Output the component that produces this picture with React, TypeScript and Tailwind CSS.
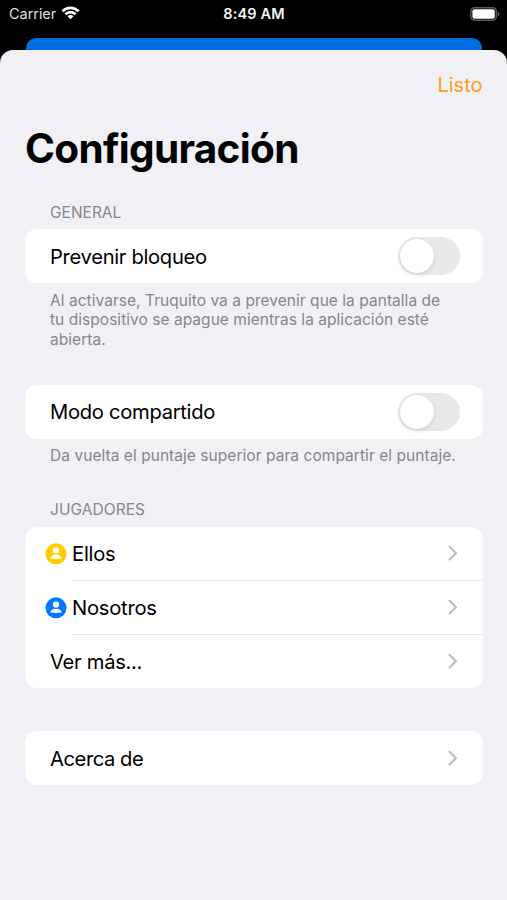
import { ReactNode, useState } from "react";

type ToggleProps = {
  label: string;
  checked: boolean;
  onChange: () => void;
};

function Toggle({ label, checked, onChange }: ToggleProps) {
  return (
    <button
      role="switch"
      aria-checked={checked}
      aria-label={label}
      onClick={onChange}
      className={`flex h-[38px] w-[62px] items-center rounded-full p-[2px] ${
        checked ? "justify-end bg-[#34c759]" : "justify-start bg-[#e9e9ea]"
      }`}
    >
      <span className="size-[34px] rounded-full bg-white shadow-[0_2px_5px_rgba(0,0,0,0.1),0_0_1px_rgba(0,0,0,0.08)]" />
    </button>
  );
}

function Chevron() {
  return (
    <svg width="10" height="16" viewBox="0 0 10 16" fill="none" className="shrink-0">
      <path d="M1.6 1.8L7.9 8.2L1.6 14.6" stroke="#bcbcbf" strokeWidth="2.1" strokeLinecap="round" strokeLinejoin="miter" />
    </svg>
  );
}

function PersonIcon({ color }: { color: string }) {
  return (
    <svg width="22" height="22" viewBox="0 0 22 22" className="shrink-0">
      <circle cx="11" cy="10.8" r="10.5" fill={color} />
      <circle cx="11" cy="7.6" r="3.1" fill="#fff" />
      <path d="M5.5 15.1C5.5 13.2 7.8 11.8 11 11.8S16.5 13.2 16.5 15.1C16.5 15.6 16.2 15.8 15.7 15.8H6.3C5.8 15.8 5.5 15.6 5.5 15.1Z" fill="#fff" />
    </svg>
  );
}

function Card({ children }: { children: ReactNode }) {
  return <div className="overflow-hidden rounded-[12px] bg-white">{children}</div>;
}

function StatusBar() {
  return (
    <div className="grid h-[28px] grid-cols-3 items-center pr-[7px] pl-[9px] text-[14.5px] leading-[28px] text-white">
      <div className="flex items-center gap-[5px]">
        <span className="tracking-[-0.05px] text-[#dedede]">Carrier</span>
        <svg width="19" height="14" viewBox="0 0 19 14" className="-mt-[2px]">
          <path d="M0.5 4.2A12.6 12.6 0 0 1 18.5 4.2L16.6 6.2A9.9 9.9 0 0 0 2.4 6.2Z" fill="#fff" />
          <path d="M3.5 7.3A8.4 8.4 0 0 1 15.5 7.3L13.6 9.2A5.7 5.7 0 0 0 5.4 9.2Z" fill="#fff" />
          <path d="M6.5 10.3A4.2 4.2 0 0 1 12.5 10.3L9.5 13.3Z" fill="#fff" />
        </svg>
      </div>
      <div className="pr-[1px] text-center font-semibold tracking-[0.15px] text-[#f4f4f4]">8:49 AM</div>
      <svg width="30" height="14" viewBox="0 0 30 14" className="-mt-[1px] justify-self-end">
        <rect x="0.9" y="0.8" width="25.4" height="12.4" rx="3.6" fill="none" stroke="#5c5c5c" strokeWidth="1.4" />
        <rect x="2.4" y="2.2" width="22.4" height="9.6" rx="2" fill="#fff" />
        <path d="M27.6 4.6C28.9 5.1 29.4 6 29.4 7S28.9 8.9 27.6 9.4Z" fill="#5c5c5c" />
      </svg>
    </div>
  );
}

const players = [
  { name: "Ellos", color: "#ffcc00" },
  { name: "Nosotros", color: "#007aff" },
];

export default function App() {
  const [preventLock, setPreventLock] = useState(false);
  const [sharedMode, setSharedMode] = useState(false);

  return (
    <div className="flex h-[900px] w-[507px] flex-col overflow-hidden bg-black font-['Inter','Liberation_Sans',sans-serif] text-[20.2px] text-black">
      <StatusBar />

      {/* Screen behind the sheet */}
      <div className="mr-[25px] ml-[26px] mt-[9.5px] h-[12px] shrink-0 rounded-t-[10px] bg-[#006ee0]" />

      <main className="flex-1 rounded-t-[13px] bg-[#f1f0f5] pr-[24.5px] pl-[25px]">
        <div className="flex h-[70px] items-center justify-end">
          <button className="pt-[1px] tracking-[-0.1px] text-[#ff9f1c]">Listo</button>
        </div>
        <h1 className="h-[59px] text-[40.5px] leading-[58px] font-bold tracking-[-0.68px]">Configuración</h1>

        <h2 className="mt-[24px] h-[26.5px] pl-[25px] text-[15.5px] leading-[20px] text-[#86868b]">GENERAL</h2>
        <Card>
          <div className="flex h-[54px] items-center justify-between pr-[22.5px] pl-[25px]">
            <span className="pt-[2px] tracking-[-0.32px]">Prevenir bloqueo</span>
            <Toggle label="Prevenir bloqueo" checked={preventLock} onChange={() => setPreventLock(!preventLock)} />
          </div>
        </Card>
        <p className="mt-[7.5px] h-[94px] pl-[25px] text-[15.5px] leading-[19.5px] tracking-[0.04px] whitespace-nowrap text-[#86868b]">
          Al activarse, Truquito va a prevenir que la pantalla de
          <br />
          tu dispositivo se apague mientras la aplicación esté
          <br />
          abierta.
        </p>

        <Card>
          <div className="flex h-[54px] items-center justify-between pr-[22.5px] pl-[25px]">
            <span className="pt-[2px] tracking-[-0.3px]">Modo compartido</span>
            <Toggle label="Modo compartido" checked={sharedMode} onChange={() => setSharedMode(!sharedMode)} />
          </div>
        </Card>
        <p className="mt-[7px] h-[54px] pl-[25px] text-[15.5px] leading-[19.5px] tracking-[0.05px] whitespace-nowrap text-[#86868b]">
          Da vuelta el puntaje superior para compartir el puntaje.
        </p>

        <h2 className="h-[27px] pl-[25px] text-[15.5px] leading-[20px] tracking-[0.05px] text-[#86868b]">JUGADORES</h2>
        <Card>
          {players.map((player) => (
            <div key={player.name} className="flex h-[54px] items-center gap-[5px] pl-[20px]">
              <PersonIcon color={player.color} />
              <div className="flex h-full flex-1 items-center justify-between border-b border-[#e9e9eb] pr-[25px]">
                <span className="pt-[2px] tracking-[-0.25px]">{player.name}</span>
                <Chevron />
              </div>
            </div>
          ))}
          <div className="flex h-[53px] items-center justify-between pr-[25px] pl-[25px]">
            <span className="pt-[2px] tracking-[-0.3px]">Ver más...</span>
            <Chevron />
          </div>
        </Card>

        <div className="mt-[43px]">
          <Card>
            <div className="flex h-[54px] items-center justify-between pr-[25px] pl-[25px]">
              <span className="pt-[3px] tracking-[-0.45px]">Acerca de</span>
              <Chevron />
            </div>
          </Card>
        </div>
      </main>
    </div>
  );
}
